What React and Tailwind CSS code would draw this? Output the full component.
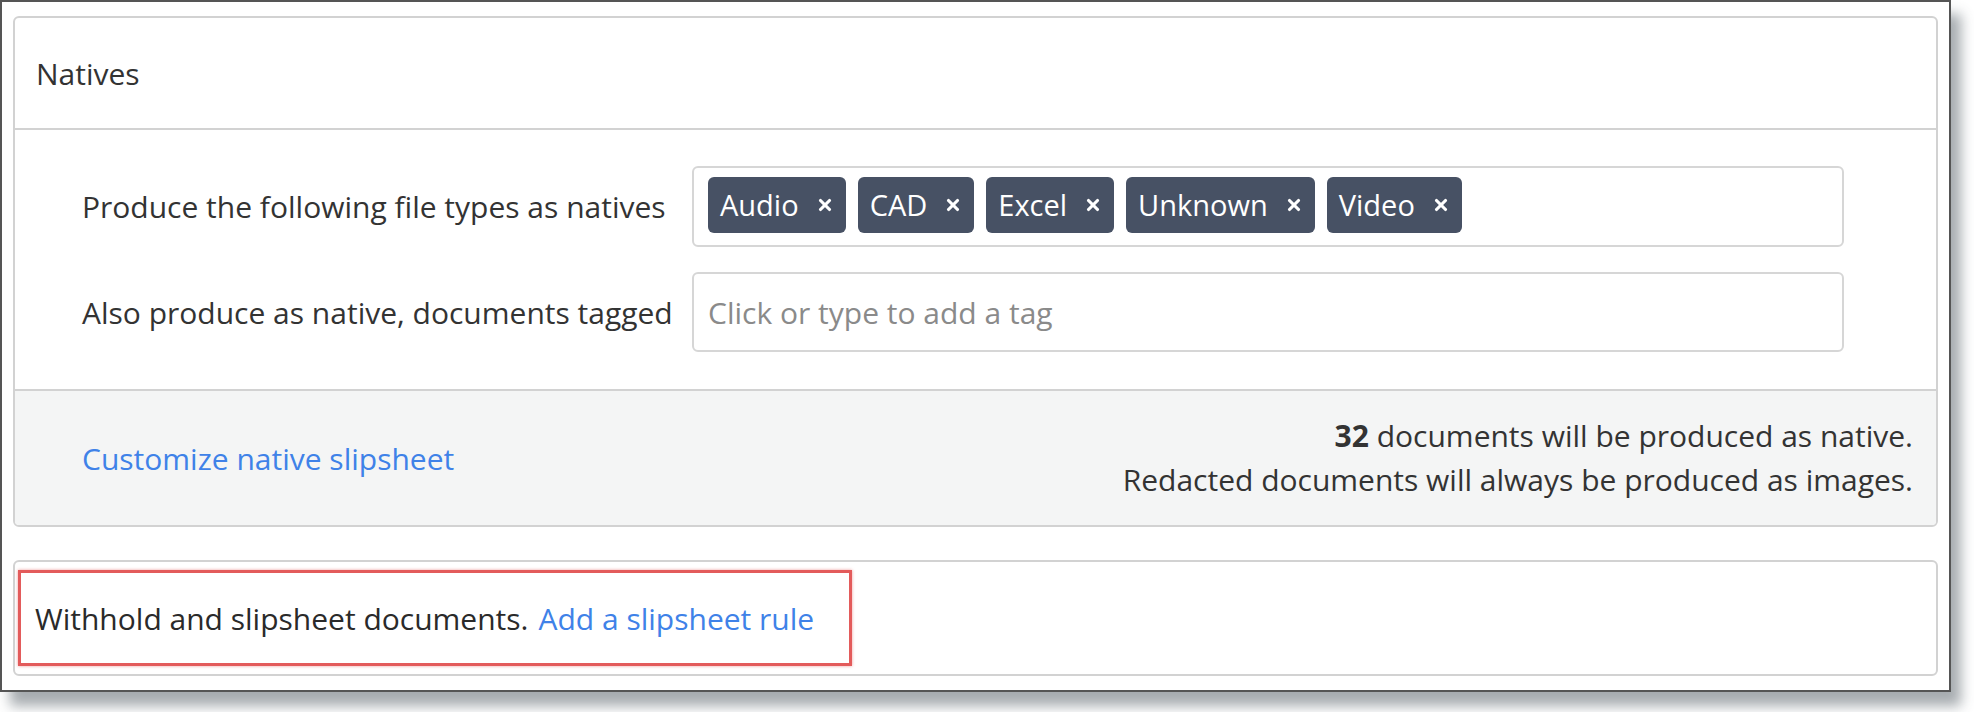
import { X } from 'lucide-react';

const FILE_TYPES = ['Audio', 'CAD', 'Excel', 'Unknown', 'Video'];

/** Dark removable chip shown inside the tag input. */
const Tag = ({ label }) => (
    <span className="flex items-center gap-[17px] h-[56px] pl-[12px] pr-[12px] rounded-[6px] bg-[#475164] text-white text-[29px]">
        {label}
        <X size={18} strokeWidth={4.2} className="text-white" />
    </span>
);

const Row = ({ label, children }) => (
    <div className="flex items-center">
        <div className="w-[610px] shrink-0 text-[30px] text-[#333]">{label}</div>
        {children}
    </div>
);

const App = () => {
    return (
        <div className="w-[1974px] h-[712px] bg-white font-['Open_Sans',sans-serif]">
            <div className="w-[1951px] h-[692px] border-2 border-[#555] bg-white shadow-[10px_14px_12px_rgba(60,70,80,0.45)] pt-[14px] px-[11px]">
                {/* Natives panel */}
                <div className="border-2 border-[#d2d2d2] rounded-[6px] overflow-hidden">
                    <div className="h-[112px] flex items-center pl-[21px] border-b-2 border-[#d2d2d2] text-[30px] text-[#333]">
                        Natives
                    </div>

                    <div className="flex flex-col gap-[25px] pt-[36px] pb-[37px] pl-[67px] pr-[92px]">
                        <Row label="Produce the following file types as natives">
                            <div className="flex-1 h-[81px] border-2 border-[#d6d6d6] rounded-[6px] flex items-center gap-[12px] pl-[14px] pb-[3px]">
                                {FILE_TYPES.map(t => <Tag key={t} label={t} />)}
                            </div>
                        </Row>
                        <Row label="Also produce as native, documents tagged">
                            <div className="flex-1 h-[80px] border-2 border-[#d6d6d6] rounded-[6px] flex items-center pl-[14px] text-[30px] text-[#8a8a8a]">
                                Click or type to add a tag
                            </div>
                        </Row>
                    </div>

                    <div className="h-[136px] bg-[#f4f5f5] border-t-2 border-[#d2d2d2] flex items-center justify-between pl-[67px] pr-[23px] text-[30px]">
                        <a className="text-[#3f82e8]">Customize native slipsheet</a>
                        <div className="text-right text-[#333] leading-[44px]">
                            <div><span className="font-bold">32</span> documents will be produced as native.</div>
                            <div>Redacted documents will always be produced as images.</div>
                        </div>
                    </div>
                </div>

                {/* Slipsheet rule panel */}
                <div className="mt-[33px] h-[116px] border-2 border-[#d2d2d2] rounded-[6px] pt-[8px] pl-[3px]">
                    <div className="w-[834px] h-[96px] border-[3px] border-[#e35b5b] shadow-[0_0_3px_rgba(227,91,91,0.6)] flex items-center pl-[14px] text-[30px]">
                        <span className="text-[#2a2a2a]">Withhold and slipsheet documents.</span>
                        <a className="ml-[10px] text-[#3f82e8]">Add a slipsheet rule</a>
                    </div>
                </div>
            </div>
        </div>
    );
};

export default App;
